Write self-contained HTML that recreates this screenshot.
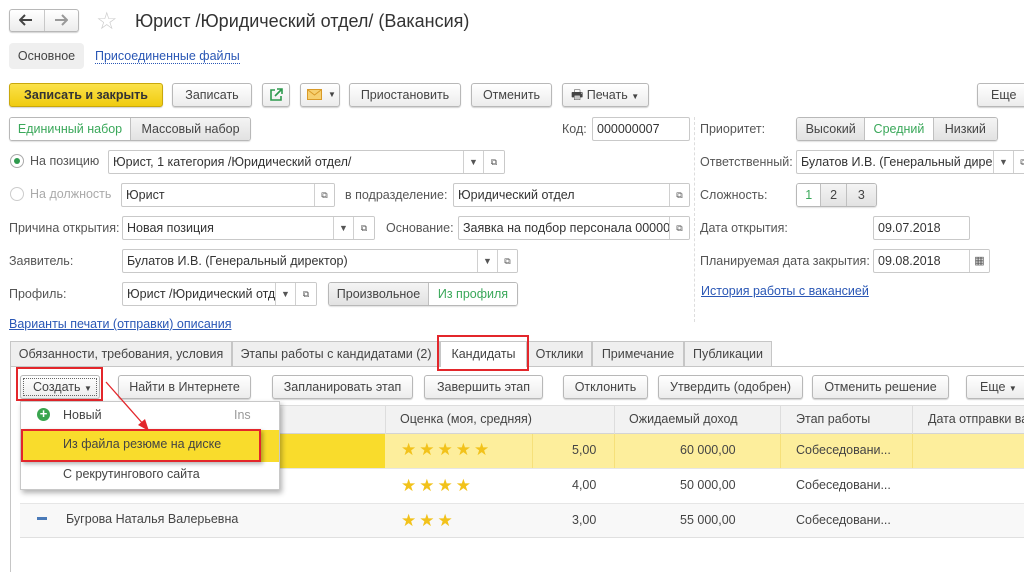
<!DOCTYPE html>
<html><head><meta charset="utf-8"><style>
*{box-sizing:border-box;margin:0;padding:0}
body{width:1024px;height:572px;overflow:hidden;background:#fff;font-family:"Liberation Sans",Arial,sans-serif;font-size:12.5px;color:#444;position:relative}
.a{position:absolute;white-space:nowrap}
.btn{position:absolute;height:24px;border:1px solid #b8b8b8;border-radius:3px;background:linear-gradient(#fff,#ececec);box-shadow:0 1px 1px rgba(0,0,0,.18);text-align:center;line-height:22px;color:#444;white-space:nowrap}
.fld{position:absolute;height:24px;border:1px solid #c9c9c9;border-radius:2px;background:#fff;line-height:22px;padding-left:4px;color:#333;white-space:nowrap;overflow:hidden}
.sb{position:absolute;top:0;height:22px;border-left:1px solid #d0d0d0;text-align:center;font-size:9px;color:#555;line-height:22px;background:#fff}
.lbl{position:absolute;color:#555;white-space:nowrap;line-height:24px}
.lnk{position:absolute;color:#2a57b5;text-decoration:underline;white-space:nowrap}
.seg{position:absolute;height:24px;border:1px solid #b8b8b8;border-radius:3px;display:flex;overflow:hidden;box-shadow:0 1px 1px rgba(0,0,0,.12)}
.seg div{border-right:1px solid #c0c0c0;text-align:center;line-height:22px;background:linear-gradient(#f4f4f4,#e2e2e2);color:#444}
.seg div.on{background:#fff;color:#3aa85a}
.seg div:last-child{border-right:none}
.tab{position:absolute;top:341px;height:25px;border:1px solid #c6c6c6;border-bottom:none;background:#efefef;line-height:24px;text-align:center;color:#444}
.red{position:absolute;border:2px solid #e3262b}
.cell{position:absolute;white-space:nowrap;color:#444}
.star{color:#f2c21b;font-size:17px;letter-spacing:3px}
</style></head><body>

<!-- header -->
<div class="btn" style="left:9px;top:9px;width:70px;height:23px"></div>
<div class="a" style="left:44px;top:10px;width:1px;height:21px;background:#c8c8c8"></div>
<svg class="a" style="left:19px;top:14px" width="14" height="12"><path d="M1 6H13M6 1L1 6L6 11" stroke="#444" stroke-width="2" fill="none"/></svg>
<svg class="a" style="left:54px;top:14px" width="14" height="12"><path d="M1 6H13M8 1L13 6L8 11" stroke="#999" stroke-width="2" fill="none"/></svg>
<div class="a" style="left:96px;top:7px;font-size:24px;color:#ccc">☆</div>
<div class="a" style="left:135px;top:11px;font-size:18px;color:#333">Юрист /Юридический отдел/ (Вакансия)</div>

<div class="a" style="left:9px;top:43px;width:75px;height:26px;background:#efefef;border-radius:4px;line-height:26px;text-align:center;color:#444">Основное</div>
<div class="a" style="left:95px;top:49px;color:#2a57b5;border-bottom:1px dotted #2a57b5;line-height:14px">Присоединенные файлы</div>

<!-- toolbar -->
<div class="btn" style="left:9px;top:83px;width:154px;background:linear-gradient(#fbe24a,#f0cc10);border-color:#c9a80c;font-weight:bold;color:#333">Записать и закрыть</div>
<div class="btn" style="left:172px;top:83px;width:80px">Записать</div>
<div class="btn" style="left:262px;top:83px;width:28px"><svg width="14" height="14" style="margin-top:4px"><path d="M6 2H2V12H12V8M8 1H13V6M13 1L6 8" stroke="#2d9a4e" stroke-width="1.6" fill="none"/></svg></div>
<div class="btn" style="left:300px;top:83px;width:40px;text-align:left;padding-left:6px"><svg width="15" height="11" style="margin-top:5px"><rect x="0.5" y="0.5" width="14" height="10" fill="#f6d070" stroke="#d99a28"/><path d="M1 1L7.5 6L14 1" stroke="#d99a28" fill="none"/></svg><span style="position:absolute;left:27px;font-size:8px">▼</span></div>
<div class="btn" style="left:349px;top:83px;width:112px">Приостановить</div>
<div class="btn" style="left:471px;top:83px;width:81px">Отменить</div>
<div class="btn" style="left:562px;top:83px;width:87px;text-align:left;padding-left:8px"><span style="font-size:13px">🖶</span> Печать <span style="font-size:8px">▼</span></div>
<div class="btn" style="left:977px;top:83px;width:60px;text-align:left;padding-left:13px">Еще</div>

<!-- row 1 -->
<div class="seg" style="left:9px;top:117px;width:242px"><div class="on" style="width:122px">Единичный набор</div><div style="width:120px">Массовый набор</div></div>
<div class="lbl" style="left:562px;top:117px">Код:</div>
<div class="fld" style="left:592px;top:117px;width:98px">000000007</div>
<div class="a" style="left:694px;top:117px;height:205px;border-left:1px dashed #ddd"></div>
<div class="lbl" style="left:700px;top:117px">Приоритет:</div>
<div class="seg" style="left:796px;top:117px;width:202px"><div style="width:69px">Высокий</div><div class="on" style="width:69px">Средний</div><div style="width:64px">Низкий</div></div>

<!-- row 2 -->
<div class="a" style="left:10px;top:154px;width:14px;height:14px;border:1px solid #aaa;border-radius:50%;background:#fff"></div>
<div class="a" style="left:14px;top:158px;width:6px;height:6px;border-radius:50%;background:#2f9a4e"></div>
<div class="lbl" style="left:30px;top:149px">На позицию</div>
<div class="fld" style="left:108px;top:150px;width:397px">Юрист, 1 категория /Юридический отдел/<div class="sb" style="left:354px;width:20px">▼</div><div class="sb" style="left:374px;width:21px">⧉</div></div>
<div class="lbl" style="left:700px;top:150px">Ответственный:</div>
<div class="fld" style="left:796px;top:150px;width:240px">Булатов И.В. (Генеральный дире<div class="sb" style="left:196px;width:20px">▼</div><div class="sb" style="left:216px;width:20px">⧉</div></div>

<!-- row 3 -->
<div class="a" style="left:10px;top:187px;width:14px;height:14px;border:1px solid #ccc;border-radius:50%"></div>
<div class="lbl" style="left:30px;top:182px;color:#aaa">На должность</div>
<div class="fld" style="left:121px;top:183px;width:214px">Юрист<div class="sb" style="left:192px;width:20px">⧉</div></div>
<div class="lbl" style="left:345px;top:183px">в подразделение:</div>
<div class="fld" style="left:453px;top:183px;width:237px">Юридический отдел<div class="sb" style="left:215px;width:20px">⧉</div></div>
<div class="lbl" style="left:700px;top:183px">Сложность:</div>
<div class="seg" style="left:796px;top:183px;width:81px"><div class="on" style="width:25px">1</div><div style="width:26px">2</div><div style="width:30px">3</div></div>

<!-- row 4 -->
<div class="lbl" style="left:9px;top:216px">Причина открытия:</div>
<div class="fld" style="left:122px;top:216px;width:253px">Новая позиция<div class="sb" style="left:210px;width:20px">▼</div><div class="sb" style="left:230px;width:21px">⧉</div></div>
<div class="lbl" style="left:386px;top:216px">Основание:</div>
<div class="fld" style="left:458px;top:216px;width:232px">Заявка на подбор персонала 00000<div class="sb" style="left:210px;width:20px">⧉</div></div>
<div class="lbl" style="left:700px;top:216px">Дата открытия:</div>
<div class="fld" style="left:873px;top:216px;width:97px">09.07.2018</div>

<!-- row 5 -->
<div class="lbl" style="left:9px;top:249px">Заявитель:</div>
<div class="fld" style="left:122px;top:249px;width:396px">Булатов И.В. (Генеральный директор)<div class="sb" style="left:354px;width:20px">▼</div><div class="sb" style="left:374px;width:20px">⧉</div></div>
<div class="lbl" style="left:700px;top:249px">Планируемая дата закрытия:</div>
<div class="fld" style="left:873px;top:249px;width:117px">09.08.2018<div class="sb" style="left:95px;width:20px;font-size:11px">▦</div></div>

<!-- row 6 -->
<div class="lbl" style="left:9px;top:282px">Профиль:</div>
<div class="fld" style="left:122px;top:282px;width:195px">Юрист /Юридический отд<div class="sb" style="left:152px;width:20px">▼</div><div class="sb" style="left:172px;width:21px">⧉</div></div>
<div class="seg" style="left:328px;top:282px;width:190px"><div style="width:101px">Произвольное</div><div class="on" style="width:89px">Из профиля</div></div>
<div class="lnk" style="left:701px;top:284px">История работы с вакансией</div>
<div class="lnk" style="left:9px;top:317px">Варианты печати (отправки) описания</div>

<!-- tabs -->
<div class="a" style="left:10px;top:366px;width:1014px;border-top:1px solid #c6c6c6"></div>
<div class="a" style="left:10px;top:366px;height:206px;border-left:1px solid #c6c6c6"></div>
<div class="tab" style="left:10px;width:222px">Обязанности, требования, условия</div>
<div class="tab" style="left:232px;width:208px">Этапы работы с кандидатами (2)</div>
<div class="tab" style="left:440px;width:87px;background:#fff;height:26px">Кандидаты</div>
<div class="tab" style="left:527px;width:65px">Отклики</div>
<div class="tab" style="left:592px;width:92px">Примечание</div>
<div class="tab" style="left:684px;width:88px">Публикации</div>
<div class="red" style="left:437px;top:335px;width:92px;height:36px"></div>

<!-- buttons -->
<div class="btn" style="left:20px;top:375px;width:80px;text-align:left;padding-left:12px">Создать <span style="font-size:8px">▼</span></div>
<div class="a" style="left:23px;top:378px;width:74px;height:18px;border:1px dotted #666"></div>
<div class="red" style="left:16px;top:367px;width:87px;height:34px"></div>
<div class="btn" style="left:118px;top:375px;width:133px">Найти в Интернете</div>
<div class="btn" style="left:272px;top:375px;width:141px">Запланировать этап</div>
<div class="btn" style="left:424px;top:375px;width:119px">Завершить этап</div>
<div class="btn" style="left:563px;top:375px;width:85px">Отклонить</div>
<div class="btn" style="left:658px;top:375px;width:145px">Утвердить (одобрен)</div>
<div class="btn" style="left:812px;top:375px;width:137px">Отменить решение</div>
<div class="btn" style="left:966px;top:375px;width:70px;text-align:left;padding-left:13px">Еще <span style="font-size:8px">▼</span></div>

<!-- table -->
<div class="a" style="left:20px;top:405px;width:1004px;height:29px;background:#f2f2f2;border-top:1px solid #ddd;border-bottom:1px solid #d4d4d4"></div>
<div class="a" style="left:385px;top:405px;height:29px;border-left:1px solid #ddd"></div>
<div class="a" style="left:614px;top:405px;height:29px;border-left:1px solid #ddd"></div>
<div class="a" style="left:780px;top:405px;height:29px;border-left:1px solid #ddd"></div>
<div class="a" style="left:912px;top:405px;height:29px;border-left:1px solid #ddd"></div>
<div class="cell" style="left:400px;top:412px">Оценка (моя, средняя)</div>
<div class="cell" style="left:629px;top:412px">Ожидаемый доход</div>
<div class="cell" style="left:796px;top:412px">Этап работы</div>
<div class="cell" style="left:928px;top:412px">Дата отправки ва</div>

<div class="a" style="left:20px;top:434px;width:365px;height:34px;background:#f9dc2c"></div>
<div class="a" style="left:385px;top:434px;width:639px;height:34px;background:#fdee9c"></div>
<div class="a" style="left:532px;top:434px;height:34px;border-left:1px solid #f6e07a"></div>
<div class="a" style="left:614px;top:434px;height:34px;border-left:1px solid #f6e07a"></div>
<div class="a" style="left:780px;top:434px;height:34px;border-left:1px solid #f6e07a"></div>
<div class="a" style="left:912px;top:434px;height:34px;border-left:1px solid #f6e07a"></div>
<div class="a" style="left:20px;top:468px;width:1004px;border-top:1px solid #e6e6e6"></div>
<div class="a" style="left:20px;top:503px;width:1004px;height:35px;background:#f8f8f8;border-top:1px solid #e6e6e6;border-bottom:1px solid #e0e0e0"></div>

<div class="cell star" style="left:401px;top:440px">★★★★★</div>
<div class="cell" style="left:572px;top:443px">5,00</div>
<div class="cell" style="left:680px;top:443px">60 000,00</div>
<div class="cell" style="left:796px;top:443px">Собеседовани...</div>
<div class="cell star" style="left:401px;top:476px">★★★★</div>
<div class="cell" style="left:572px;top:478px">4,00</div>
<div class="cell" style="left:680px;top:478px">50 000,00</div>
<div class="cell" style="left:796px;top:478px">Собеседовани...</div>
<div class="a" style="left:37px;top:517px;width:10px;height:3px;background:#4a7ab8"></div>
<div class="cell" style="left:66px;top:512px">Бугрова Наталья Валерьевна</div>
<div class="cell star" style="left:401px;top:511px">★★★</div>
<div class="cell" style="left:572px;top:513px">3,00</div>
<div class="cell" style="left:680px;top:513px">55 000,00</div>
<div class="cell" style="left:796px;top:513px">Собеседовани...</div>

<!-- dropdown -->
<div class="a" style="left:20px;top:401px;width:260px;height:89px;background:#fff;border:1px solid #c8c8c8;box-shadow:2px 3px 5px rgba(0,0,0,.3)"></div>
<div class="a" style="left:37px;top:408px;width:13px;height:13px;border-radius:50%;background:#3aa54f;color:#fff;font-size:13px;line-height:12px;text-align:center;font-weight:bold">+</div>
<div class="cell" style="left:63px;top:408px">Новый</div>
<div class="cell" style="left:234px;top:408px;color:#999">Ins</div>
<div class="a" style="left:21px;top:430px;width:258px;height:32px;background:#f9dc2c"></div>
<div class="cell" style="left:63px;top:437px">Из файла резюме на диске</div>
<div class="red" style="left:21px;top:429px;width:240px;height:33px;box-shadow:2px 2px 4px rgba(0,0,0,.3)"></div>
<div class="cell" style="left:63px;top:467px">С рекрутингового сайта</div>

<!-- arrow -->
<svg class="a" style="left:0;top:0" width="200" height="450"><path d="M106 382L144 425" stroke="#e3262b" stroke-width="1.3"/><path d="M149 431L138 425L145 419Z" fill="#e3262b"/></svg>
</body></html>
